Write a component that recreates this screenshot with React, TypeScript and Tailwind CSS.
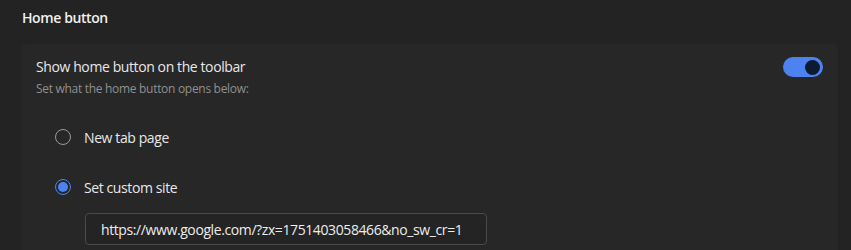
import React, { useState } from "react";

const App = () => {
  const [on, setOn] = useState(true);
  const [choice, setChoice] = useState("custom");
  const [url, setUrl] = useState(
    "https://www.google.com/?zx=1751403058466&no_sw_cr=1"
  );

  return (
    <div
      className="w-[851px] h-[250px] overflow-hidden bg-[#232323] text-[#e3e3e3] tracking-[-0.4px]"
      style={{ fontFamily: '"Open Sans", "Noto Sans", sans-serif' }}
    >
      <div className="pl-[22px] pt-[7px] h-[44px] text-[14px] font-semibold text-[#f0f0f0]">
        Home button
      </div>
      <div className="ml-[21px] w-[817px] h-[220px] bg-[#272727] rounded-t-[6px]">
        <div className="flex items-start justify-between pl-[15px] pr-[15px] pt-[13px]">
          <div>
            <div className="text-[14px] leading-[20px] text-[#e8e8e8]">
              Show home button on the toolbar
            </div>
            <div className="mt-[3px] text-[12px] leading-[18px] text-[#8f8f8f] tracking-[-0.3px]">
              Set what the home button opens below:
            </div>
          </div>
          <button
            onClick={() => setOn(!on)}
            className={`w-[40px] h-[20px] rounded-full flex items-center px-[3px] ${
              on ? "bg-[#4d83f0] justify-end" : "bg-[#555] justify-start"
            }`}
          >
            <span className="w-[15px] h-[15px] rounded-full bg-[#0d1a30]" />
          </button>
        </div>

        <div className="pl-[34px] pt-[24px]">
          <label
            className="flex items-center gap-[13px] h-[30px] cursor-pointer"
            onClick={() => setChoice("ntp")}
          >
            <span
              className={`w-[16px] h-[16px] rounded-full border-[1.5px] flex items-center justify-center ${
                choice === "ntp" ? "border-[#4d83f0]" : "border-[#9a9a9a]"
              }`}
            >
              {choice === "ntp" && (
                <span className="w-[10px] h-[10px] rounded-full bg-[#4d83f0]" />
              )}
            </span>
            <span className="text-[14px] text-[#e8e8e8]">New tab page</span>
          </label>
          <label
            className="flex items-center gap-[13px] h-[30px] mt-[20px] cursor-pointer"
            onClick={() => setChoice("custom")}
          >
            <span
              className={`w-[16px] h-[16px] rounded-full border-[1.5px] flex items-center justify-center ${
                choice === "custom" ? "border-[#4d83f0]" : "border-[#9a9a9a]"
              }`}
            >
              {choice === "custom" && (
                <span className="w-[10px] h-[10px] rounded-full bg-[#4d83f0]" />
              )}
            </span>
            <span className="text-[14px] text-[#e8e8e8]">Set custom site</span>
          </label>
          <input
            value={url}
            onChange={(e) => setUrl(e.target.value)}
            className="mt-[11px] ml-[30px] w-[402px] h-[32px] rounded-[4px] border border-[#4a4a4a] bg-[#242424] px-[15px] text-[14px] text-[#ececec] outline-none tracking-[-0.4px]"
          />
        </div>
      </div>
    </div>
  );
};

export default App;
